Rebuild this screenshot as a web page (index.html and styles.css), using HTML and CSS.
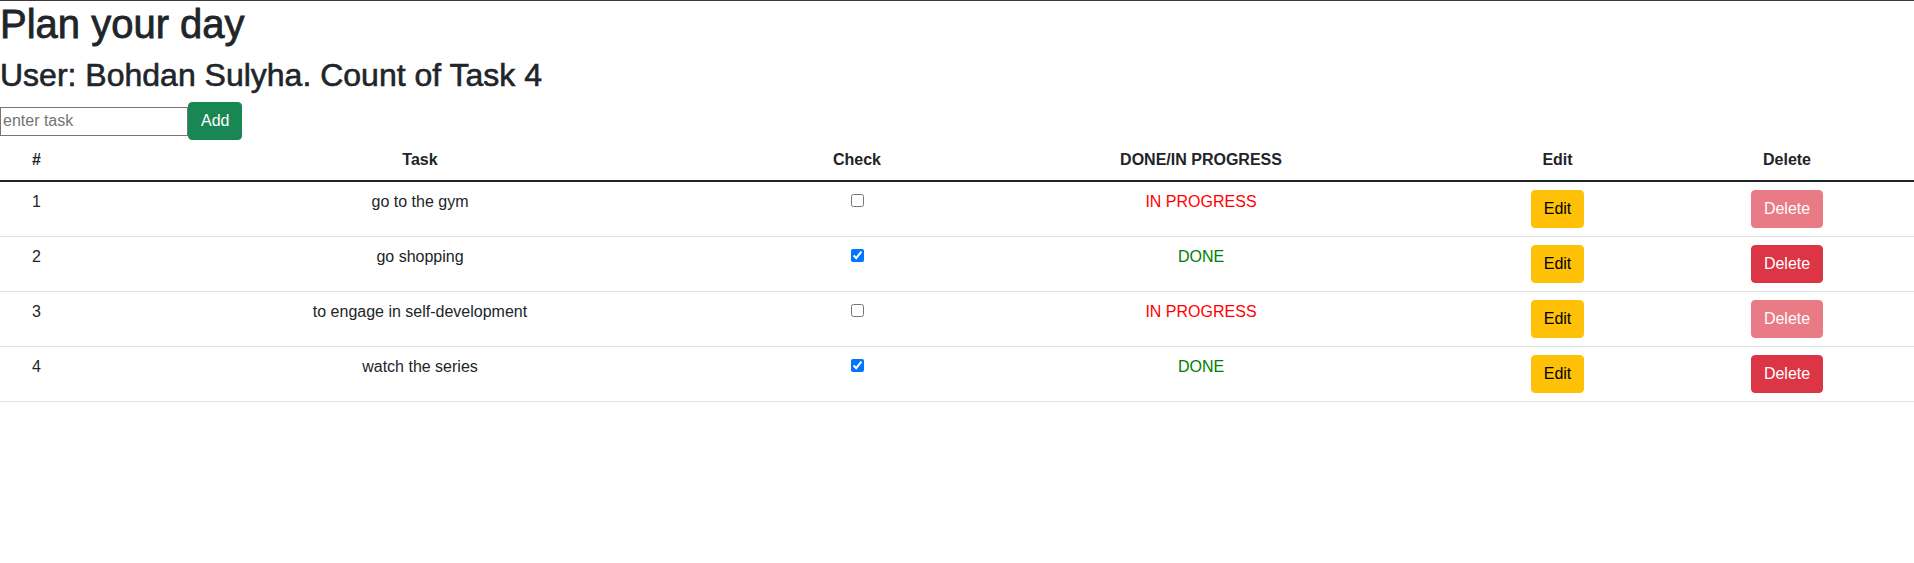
FILE: index.html
```html
<!DOCTYPE html>
<html lang="en">
<head>
<meta charset="utf-8">
<title>Plan your day</title>
<link rel="stylesheet" href="styles.css">
</head>
<body>
<h1 class="title">Plan your day</h1>
<h2 class="subtitle">User: Bohdan Sulyha. Count of Task 4</h2>
<div class="add-form">
  <input class="task-input" type="text" placeholder="enter task">
  <button class="btn btn-success">Add</button>
</div>
<table class="table">
  <colgroup>
    <col class="c-num"><col class="c-task"><col class="c-check"><col class="c-status"><col class="c-edit"><col class="c-del">
  </colgroup>
  <thead>
    <tr><th>#</th><th>Task</th><th>Check</th><th>DONE/IN PROGRESS</th><th>Edit</th><th>Delete</th></tr>
  </thead>
  <tbody>
    <tr>
      <td>1</td><td>go to the gym</td><td><input type="checkbox"></td>
      <td class="st-progress">IN PROGRESS</td>
      <td><button class="btn btn-warning">Edit</button></td>
      <td><button class="btn btn-danger" disabled>Delete</button></td>
    </tr>
    <tr>
      <td>2</td><td>go shopping</td><td><input type="checkbox" checked></td>
      <td class="st-done">DONE</td>
      <td><button class="btn btn-warning">Edit</button></td>
      <td><button class="btn btn-danger">Delete</button></td>
    </tr>
    <tr>
      <td>3</td><td>to engage in self-development</td><td><input type="checkbox"></td>
      <td class="st-progress">IN PROGRESS</td>
      <td><button class="btn btn-warning">Edit</button></td>
      <td><button class="btn btn-danger" disabled>Delete</button></td>
    </tr>
    <tr>
      <td>4</td><td>watch the series</td><td><input type="checkbox" checked></td>
      <td class="st-done">DONE</td>
      <td><button class="btn btn-warning">Edit</button></td>
      <td><button class="btn btn-danger">Delete</button></td>
    </tr>
  </tbody>
</table>
</body>
</html>
```
FILE: styles.css
```css
html {
  box-shadow: inset 0 1px 0 #463446;
}
body {
  margin: 0;
  font-family: "Liberation Sans", Arial, sans-serif;
  font-size: 16px;
  line-height: 1.5;
  color: #212529;
  background: #fff;
}
.title {
  margin: 0 0 8px;
  font-size: 40px;
  font-weight: 500;
  line-height: 1.2;
  -webkit-text-stroke: 0.8px #212529;
}
.subtitle {
  margin: 0 0 8px;
  font-size: 32px;
  font-weight: 500;
  line-height: 1.2;
  -webkit-text-stroke: 0.6px #212529;
}
.add-form {
  display: flex;
  align-items: baseline;
}
.task-input {
  box-sizing: border-box;
  width: 188px;
  height: 29px;
  margin: 0;
  padding: 1px 2px;
  border: 1px solid #767676;
  font-family: inherit;
  font-size: 16px;
  line-height: 24px;
  color: #212529;
}
.task-input::placeholder {
  color: #757575;
}
.btn {
  display: inline-block;
  margin: 0;
  padding: 6px 12px;
  border: 1px solid transparent;
  border-radius: 4px;
  font-family: inherit;
  font-size: 16px;
  line-height: 24px;
  font-weight: 400;
  cursor: pointer;
}
.btn-success {
  background: #198754;
  border-color: #198754;
  color: #fff;
}
.btn-warning {
  background: #ffc107;
  border-color: #ffc107;
  color: #000;
}
.btn-danger {
  background: #dc3545;
  border-color: #dc3545;
  color: #fff;
}
.btn:disabled {
  opacity: 0.65;
  cursor: default;
}
.table {
  width: 100%;
  table-layout: fixed;
  border-collapse: collapse;
  margin-bottom: 16px;
  color: #212529;
}
.c-num { width: 73px; }
.c-task { width: 694px; }
.c-check { width: 180px; }
.c-status { width: 508px; }
.c-edit { width: 205px; }
.c-del { width: 254px; }
.table th,
.table td {
  padding: 8px;
  text-align: center;
  vertical-align: top;
  border-bottom: 1px solid #dee2e6;
}
.table th {
  font-weight: 700;
  border-bottom: 2px solid #212529;
}
.table input[type="checkbox"] {
  margin: 4px 3px 2px 4px;
}
.st-progress { color: #ff0000; }
.st-done { color: #008000; }
```
